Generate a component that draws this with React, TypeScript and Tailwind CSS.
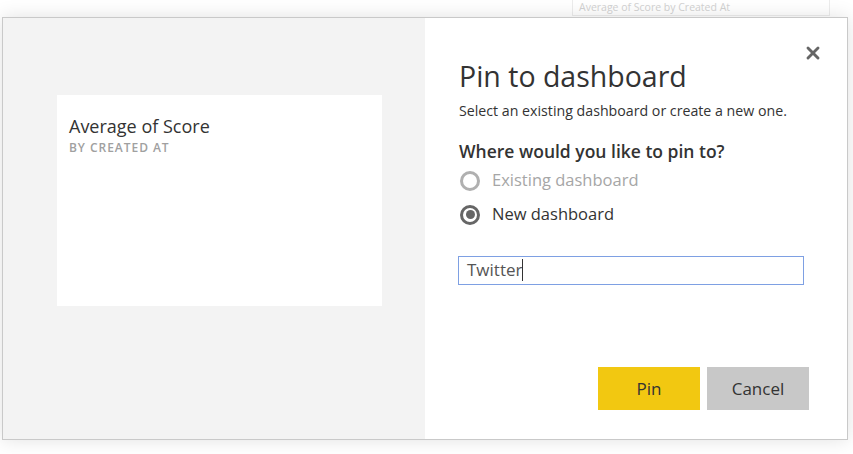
import { X } from "lucide-react";

const font = { fontFamily: '"Open Sans", "Noto Sans", sans-serif' };

const Radio = ({ label, checked }: { label: string; checked?: boolean }) => (
    <label className="flex items-center gap-[12px] h-[34px]">
        <span
            className={`w-[20px] h-[20px] rounded-full border-[3px] flex items-center justify-center ${
                checked ? "border-[#666]" : "border-[#b0b0b0]"
            }`}
        >
            {checked && <span className="w-[9px] h-[9px] rounded-full bg-[#666]" />}
        </span>
        <span className={`text-[16.5px] ${checked ? "text-[#333]" : "text-[#a6a6a6]"}`}>{label}</span>
    </label>
);

export default function App() {
    return (
        <div className="w-[853px] h-[454px] bg-white relative overflow-hidden" style={font}>
            {/* report tile behind the dialog */}
            <div className="absolute left-[572px] top-0 w-[258px] h-[16px] border-x border-b border-[#ececec] px-[6px] text-[10.5px] leading-[14px] text-[#d2d2d2]">
                Average of Score by Created At
            </div>

            {/* dialog */}
            <div className="relative mt-[17px] ml-[2px] w-[846px] h-[423px] border border-[#c9c9c9] bg-white flex shadow-[0_0_18px_rgba(0,0,0,0.12)]">
                {/* preview */}
                <div className="w-[422px] shrink-0 bg-[#f3f3f3] pl-[54px] pt-[77px]">
                    <div className="w-[325px] h-[211px] bg-white px-[12px] pt-[19px]">
                        <div className="text-[18px] leading-[24px] text-[#333]">Average of Score</div>
                        <div className="text-[12px] font-semibold tracking-[0.08em] text-[#a0a0a0] mt-[1px]">BY CREATED AT</div>
                    </div>
                </div>

                {/* form */}
                <div className="flex-1 min-w-0 pl-[33px] pr-[38px] pt-[38px] flex flex-col relative">
                    <button className="absolute right-[24px] top-[25px] text-[#666]">
                        <X size={20} strokeWidth={3.5} />
                    </button>
                    <h2 className="pl-px text-[28.5px] leading-[40px] text-[#333]">Pin to dashboard</h2>
                    <p className="pl-px text-[14.2px] text-[#333] mt-[4px] whitespace-nowrap">Select an existing dashboard or create a new one.</p>
                    <h3 className="pl-px text-[17.5px] font-semibold text-[#333] mt-[17px] whitespace-nowrap">Where would you like to pin to?</h3>
                    <div className="pl-[2px] flex flex-col -mt-[1px]">
                        <Radio label="Existing dashboard" />
                        <Radio label="New dashboard" checked />
                    </div>
                    <div className="mt-[24px] w-[346px] h-[29px] border border-[#7ea0e3] flex items-center px-[8px] text-[17px] text-[#555]">
                        Twitter
                        <span className="w-px h-[22px] bg-[#333]" />
                    </div>
                    <div className="mt-auto mb-[29px] flex justify-end gap-[7px]">
                        <button className="w-[102px] h-[43px] bg-[#f2c811] text-[17px] text-[#333]">Pin</button>
                        <button className="w-[102px] h-[43px] bg-[#c8c8c8] text-[17px] text-[#333]">Cancel</button>
                    </div>
                </div>
            </div>
        </div>
    );
}
